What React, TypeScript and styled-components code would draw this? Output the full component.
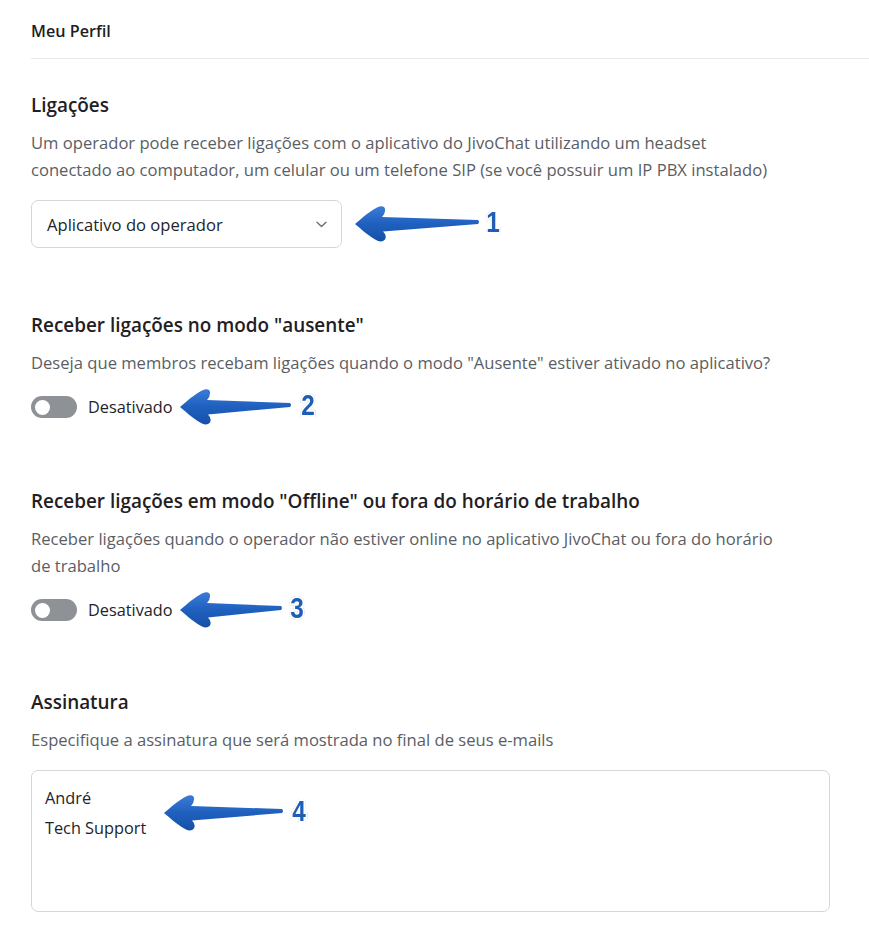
import React from 'react';
import styled, { createGlobalStyle } from 'styled-components';

const GlobalStyle = createGlobalStyle`
  body {
    margin: 0;
    background: #ffffff;
    font-family: "Open Sans", "Noto Sans", Arial, sans-serif;
    color: #222428;
  }
`;

const Page = styled.div`
  width: 869px;
  min-height: 948px;
  box-sizing: border-box;
  padding-left: 31px;
  overflow: hidden;
`;

const TopBar = styled.div`
  height: 59px;
  box-sizing: border-box;
  padding-top: 21px;
  border-bottom: 1px solid #e8e9eb;
  font-size: 16.2px;
  line-height: 20px;
  font-weight: 600;
  color: #1d1f22;
`;

const Content = styled.div`
  width: 800px;
  padding-top: 34px;
`;

const Section = styled.section<{ $gap?: number }>`
  margin-top: ${(p) => p.$gap ?? 0}px;
`;

const Heading = styled.h2`
  margin: 0;
  font-size: 18.9px;
  line-height: 24px;
  font-weight: 600;
  color: #1f2023;
`;

const Description = styled.p`
  margin: 12px 0 0;
  max-width: 755px;
  font-size: 16.6px;
  line-height: 27px;
  color: #5a5e64;
`;

const ControlRow = styled.div<{ $h?: number }>`
  margin-top: 17px;
  display: flex;
  align-items: center;
  height: ${(p) => p.$h ?? 28}px;
`;

const Select = styled.div`
  width: 311px;
  height: 48px;
  box-sizing: border-box;
  border: 1px solid #d3d6da;
  border-radius: 7px;
  padding: 0 14px 0 15px;
  display: flex;
  align-items: center;
  justify-content: space-between;
  font-size: 16.6px;
  color: #222428;
`;

const Switch = styled.div<{ $on?: boolean }>`
  width: 46px;
  height: 22px;
  border-radius: 11px;
  background: ${(p) => (p.$on ? '#1e88e5' : '#8e9196')};
  position: relative;
  flex-shrink: 0;

  &::after {
    content: '';
    position: absolute;
    top: 3.5px;
    left: ${(p) => (p.$on ? '27px' : '3.5px')};
    width: 15px;
    height: 15px;
    border-radius: 50%;
    background: #ffffff;
  }
`;

const SwitchLabel = styled.span`
  margin-left: 11px;
  font-size: 16.3px;
  color: #222428;
`;

const TextAreaWrap = styled.div`
  position: relative;
  margin-top: 17px;
  width: 799px;
  height: 142px;
  box-sizing: border-box;
  border: 1px solid #d3d6da;
  border-radius: 7px;
  padding: 12px 13px;
  font-size: 16.3px;
  line-height: 30px;
  color: #222428;
`;

const Annotation = styled.div<{ $offset: number }>`
  display: flex;
  align-items: center;
  margin-left: ${(p) => p.$offset}px;
`;

const FloatingAnnotation = styled(Annotation)`
  position: absolute;
  left: 131px;
  top: 23px;
  margin-left: 0;
`;

const Number = styled.span<{ $gap: number }>`
  display: inline-block;
  margin-left: ${(p) => p.$gap}px;
  margin-top: -5px;
  font-family: "Liberation Sans", Arial, sans-serif;
  font-weight: 700;
  font-size: 29px;
  line-height: 30px;
  color: #1f5db7;
  transform: scaleX(0.84);
  -webkit-text-stroke: 4px #ffffff;
  paint-order: stroke fill;
  filter: drop-shadow(0 0.5px 0.6px rgba(0, 0, 0, 0.3));
`;

const arrowPath = (len: number) =>
  `M1,19 C8,13 16,6 23,2.5 Q30,-0.5 31,4 Q31.5,8 28,12 L${len - 1},15 Q${len + 1},17 ${len - 1},19 L29,26.5 Q33,30.5 31,34.5 Q28,38 23,35.5 C16,32 8,25 1,19 Z`;

const Arrow: React.FC<{ len: number; id: string }> = ({ len, id }) => (
  <svg width={len + 1} height="38" viewBox={`0 0 ${len + 1} 38`} style={{ overflow: 'visible' }}>
    <defs>
      <linearGradient id={id} x1="0" y1="0" x2="0" y2="1">
        <stop offset="0" stopColor="#3b7bd8" />
        <stop offset="0.5" stopColor="#1f60bf" />
        <stop offset="1" stopColor="#1550a6" />
      </linearGradient>
    </defs>
    <path d={arrowPath(len)} fill={`url(#${id})`} />
  </svg>
);

const Chevron = () => (
  <svg width="11" height="7" viewBox="0 0 11 7">
    <path d="M1 1.2 L5.5 5.5 L10 1.2" fill="none" stroke="#6d7177" strokeWidth="1.4" strokeLinecap="round" strokeLinejoin="round" />
  </svg>
);

export default function App() {
  return (
    <Page>
      <GlobalStyle />
      <TopBar>Meu Perfil</TopBar>
      <Content>
        <Section>
          <Heading>Ligações</Heading>
          <Description>
            Um operador pode receber ligações com o aplicativo do JivoChat utilizando um headset
            conectado ao computador, um celular ou um telefone SIP (se você possuir um IP PBX instalado)
          </Description>
          <ControlRow $h={48}>
            <Select>
              <span>Aplicativo do operador</span>
              <Chevron />
            </Select>
            <Annotation $offset={12}>
              <Arrow len={125} id="a1" />
              <Number $gap={5}>1</Number>
            </Annotation>
          </ControlRow>
        </Section>

        <Section $gap={65}>
          <Heading>Receber ligações no modo "ausente"</Heading>
          <Description>
            Deseja que membros recebam ligações quando o modo "Ausente" estiver ativado no aplicativo?
          </Description>
          <ControlRow>
            <Switch />
            <SwitchLabel>Desativado</SwitchLabel>
            <Annotation $offset={6}>
              <Arrow len={112} id="a2" />
              <Number $gap={8}>2</Number>
            </Annotation>
          </ControlRow>
        </Section>

        <Section $gap={68}>
          <Heading>Receber ligações em modo "Offline" ou fora do horário de trabalho</Heading>
          <Description>
            Receber ligações quando o operador não estiver online no aplicativo JivoChat ou fora do horário
            de trabalho
          </Description>
          <ControlRow>
            <Switch />
            <SwitchLabel>Desativado</SwitchLabel>
            <Annotation $offset={6}>
              <Arrow len={103} id="a3" />
              <Number $gap={6}>3</Number>
            </Annotation>
          </ControlRow>
        </Section>

        <Section $gap={66}>
          <Heading>Assinatura</Heading>
          <Description>Especifique a assinatura que será mostrada no final de seus e-mails</Description>
          <TextAreaWrap>
            André
            <br />
            Tech Support
            <FloatingAnnotation $offset={0}>
              <Arrow len={120} id="a4" />
              <Number $gap={7}>4</Number>
            </FloatingAnnotation>
          </TextAreaWrap>
        </Section>
      </Content>
    </Page>
  );
}
